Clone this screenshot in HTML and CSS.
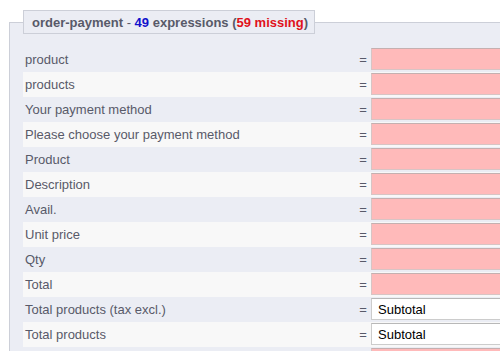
FILE: index.html
```html
<!DOCTYPE html>
<html lang="en">
<head>
    <meta charset="UTF-8">
    <title>Translations - order-payment</title>
    <link rel="stylesheet" href="styles.css">
</head>
<body>
    <fieldset class="module">
        <legend class="module-title">
            order-payment <span class="dash">-</span> <span class="count">49</span> expressions (<span class="missing">59 missing</span>)
        </legend>
        <div class="row">
            <div class="label">product</div>
            <div class="eq">=</div>
            <input class="field field-missing" type="text" value="">
        </div>
        <div class="row">
            <div class="label">products</div>
            <div class="eq">=</div>
            <input class="field field-missing" type="text" value="">
        </div>
        <div class="row">
            <div class="label">Your payment method</div>
            <div class="eq">=</div>
            <input class="field field-missing" type="text" value="">
        </div>
        <div class="row">
            <div class="label">Please choose your payment method</div>
            <div class="eq">=</div>
            <input class="field field-missing" type="text" value="">
        </div>
        <div class="row">
            <div class="label">Product</div>
            <div class="eq">=</div>
            <input class="field field-missing" type="text" value="">
        </div>
        <div class="row">
            <div class="label">Description</div>
            <div class="eq">=</div>
            <input class="field field-missing" type="text" value="">
        </div>
        <div class="row">
            <div class="label">Avail.</div>
            <div class="eq">=</div>
            <input class="field field-missing" type="text" value="">
        </div>
        <div class="row">
            <div class="label">Unit price</div>
            <div class="eq">=</div>
            <input class="field field-missing" type="text" value="">
        </div>
        <div class="row">
            <div class="label">Qty</div>
            <div class="eq">=</div>
            <input class="field field-missing" type="text" value="">
        </div>
        <div class="row">
            <div class="label">Total</div>
            <div class="eq">=</div>
            <input class="field field-missing" type="text" value="">
        </div>
        <div class="row">
            <div class="label">Total products (tax excl.)</div>
            <div class="eq">=</div>
            <input class="field" type="text" value="Subtotal">
        </div>
        <div class="row">
            <div class="label">Total products</div>
            <div class="eq">=</div>
            <input class="field" type="text" value="Subtotal">
        </div>
        <div class="row">
            <div class="label">Total vouchers</div>
            <div class="eq">=</div>
            <input class="field field-missing" type="text" value="">
        </div>
    </fieldset>
</body>
</html>
```

FILE: styles.css
```css
:root {
    --text-color: #585a69;
    --panel-bg: #ebedf4;
    --panel-border: #cccfd8;
    --alt-row: #f8f8f8;
    --missing-bg: #ffbaba;
    --font-family: Arial, "Liberation Sans", sans-serif;
}

html, body {
    overflow: hidden;
}

body {
    margin: 0;
    padding: 0 0 0 9px;
    background-color: #ffffff;
    color: var(--text-color);
    font-family: var(--font-family);
    font-size: 13px;
}

.module {
    width: 800px;
    margin: 10px 0 0 0;
    padding: 13px 13px 10px 13px;
    background-color: var(--panel-bg);
    border: 1px solid var(--panel-border);
}

.module-title {
    padding: 4px 6px 3px 8px;
    background-color: var(--panel-bg);
    border: 1px solid var(--panel-border);
    font-weight: bold;
    line-height: 15px;
}

.dash {
    font-weight: normal;
}

.count {
    color: #1111cc;
}

.missing {
    color: #e0111b;
}

.row {
    display: grid;
    grid-template-columns: 332px 16px 1fr;
    height: 25px;
}

.row:nth-child(odd) {
    background-color: var(--alt-row);
}

.label {
    padding-left: 2px;
    line-height: 25px;
}

.eq {
    line-height: 25px;
    text-align: center;
}

.field {
    box-sizing: border-box;
    height: 22px;
    margin: 1px 0 0 0;
    padding: 0 6px;
    border: 1px solid #cccccc;
    border-top-color: #b8b8b8;
    background-color: #ffffff;
    color: #000000;
    font-family: var(--font-family);
    font-size: 13px;
}

.field-missing {
    background-color: var(--missing-bg);
    border-color: #d8c4c4;
    border-top-color: #c4b0b0;
}
```
